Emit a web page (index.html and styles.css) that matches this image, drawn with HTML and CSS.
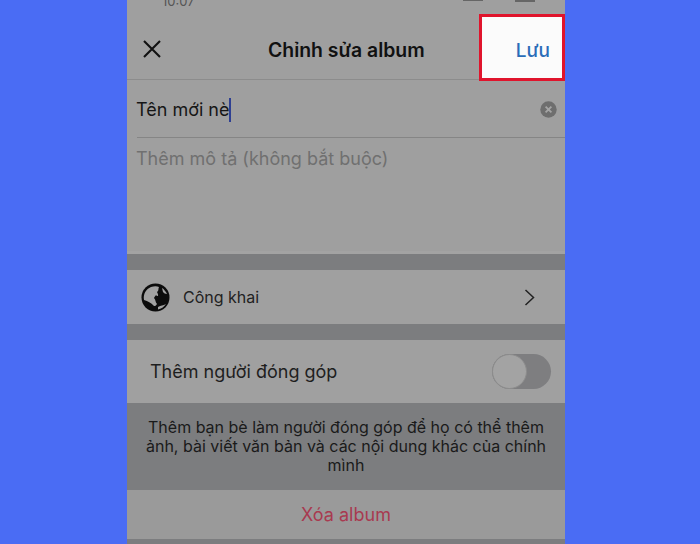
FILE: index.html
```
<!DOCTYPE html>
<html lang="vi">
<head>
<meta charset="utf-8">
<title>Chỉnh sửa album</title>
<link rel="stylesheet" href="styles.css">
</head>
<body>
<main class="phone">
  <div class="status"><span class="status-left">10:07</span><span class="signal"></span><span class="battery"></span></div>
  <header class="nav">
    <button class="close" aria-label="Đóng">
      <svg width="20" height="20" viewBox="0 0 20 20"><path d="M2 2 L18 18 M18 2 L2 18" stroke="#111" stroke-width="2.1" fill="none"/></svg>
    </button>
    <h1 class="title">Chỉnh sửa album</h1>
    <div class="save">Lưu</div>
  </header>
  <section class="fields">
    <div class="name-row">
      <span class="name">Tên mới nè</span><span class="caret"></span>
      <span class="clear">
        <svg width="17" height="17" viewBox="0 0 17 17"><circle cx="8.5" cy="8.5" r="8.2" fill="#6e6e6e"/><path d="M5.6 5.6 L11.4 11.4 M11.4 5.6 L5.6 11.4" stroke="#a5a5a5" stroke-width="1.8"/></svg>
      </span>
    </div>
    <div class="desc">Thêm mô tả (không bắt buộc)</div>
  </section>
  <div class="gap"></div>
  <section class="privacy">
    <svg class="globe" width="29" height="29" viewBox="0 0 29 29">
      <circle cx="14.5" cy="14.5" r="14" fill="#0c0c0c"/>
      <path d="M3 17 C2 11 5 6 10 4 C13 3 16 3 18 4 C17 6 18 8 16 9 C17 11 18 13 16 13 C15 11 14 13 13 15 C15 17 14 19 16 21 C15 23 13 24 12 22 C10 20 7 18 3 17 Z" fill="#a2a2a2"/>
      <path d="M17 24 C20 22 22 23 25 21 C23 24 20 26 17 26.5 Z" fill="#a2a2a2"/>
      <path d="M21 5 C23 6 25 9 26 11 C24 11 23 10 22 9 Z" fill="#a2a2a2"/>
    </svg>
    <span class="privacy-label">Công khai</span>
    <svg class="chevron" width="11" height="17" viewBox="0 0 11 17"><path d="M1.5 1 L9.5 8.5 L1.5 16" stroke="#222" stroke-width="1.5" fill="none"/></svg>
  </section>
  <div class="gap"></div>
  <section class="contrib">
    <span class="contrib-label">Thêm người đóng góp</span>
    <span class="toggle"><span class="knob"></span></span>
  </section>
  <p class="hint">Thêm bạn bè làm người đóng góp để họ có thể thêm ảnh, bài viết văn bản và các nội dung khác của chính mình</p>
  <section class="delete">Xóa album</section>
  <div class="rest"></div>
</main>
</body>
</html>
```

FILE: styles.css
```
* { box-sizing: border-box; }
html, body { margin: 0; height: 100%; }
body {
  width: 700px;
  height: 544px;
  overflow: hidden;
  background: #4a6cf4;
  display: flex;
  font-family: Inter, "Liberation Sans", sans-serif;
  color: #1c1c1c;
}
.phone {
  width: 438px;
  margin-left: 127px;
  height: 544px;
  background: #9c9c9c;
  display: flex;
  flex-direction: column;
}
.status {
  height: 18px;
  display: flex;
  align-items: flex-start;
  font-size: 13px;
  line-height: 3px;
  color: #555;
  overflow: hidden;
  padding-left: 35px;
  background: #9f9f9f;
}
.signal {
  width: 20px;
  height: 1px;
  margin-left: 268px;
  background: #666;
}
.battery {
  width: 20px;
  height: 2px;
  margin-left: 32px;
  background: #666;
}
.nav {
  height: 62px;
  display: flex;
  align-items: center;
  position: relative;
  background: #9f9f9f;
  border-bottom: 1px solid #8c8c8c;
}
.close {
  border: 0;
  background: none;
  padding: 0;
  margin-left: 15px;
  width: 20px;
  height: 20px;
  display: flex;
}
.title {
  position: absolute;
  left: 141px;
  top: 20px;
  margin: 0;
  font-size: 19.4px;
  line-height: 24px;
  font-weight: 600;
  color: #111;
  white-space: nowrap;
}
.save {
  position: absolute;
  right: 0;
  top: -4px;
  width: 86px;
  height: 67px;
  background: #fbfbfb;
  border: 3px solid #e0142c;
  color: #2a6db8;
  font-size: 19px;
  font-weight: 500;
  line-height: 67px;
  text-align: right;
  padding-right: 12px;
}
.fields {
  height: 174px;
  padding-left: 10px;
  background: #9f9f9f;
  border-bottom: 3px solid #a3a3a3;
}
.name-row {
  height: 58px;
  display: flex;
  align-items: center;
  border-bottom: 1px solid #858585;
  font-size: 18px;
  padding-top: 2px;
}
.name { color: #161616; white-space: nowrap; margin-left: -1px; }
.caret {
  width: 2px;
  height: 24px;
  background: #2e3f92;
}
.clear {
  margin-left: auto;
  margin-right: 8px;
  display: flex;
}
.desc {
  margin-top: 9px;
  margin-left: -1px;
  font-size: 18px;
  line-height: 24px;
  color: #707070;
  white-space: nowrap;
}
.gap {
  height: 16px;
  background: #7c7d7f;
}
.privacy {
  height: 54px;
  display: flex;
  align-items: center;
  padding-left: 14px;
  background: #a0a0a0;
}
.privacy-label {
  margin-left: 13px;
  font-size: 16px;
  color: #222;
}
.chevron {
  margin-left: auto;
  margin-right: 30px;
}
.contrib {
  height: 63px;
  display: flex;
  align-items: center;
  padding-left: 24px;
  background: #a0a0a0;
}
.contrib-label {
  font-size: 18px;
  color: #1e1e1e;
  margin-left: -1px;
}
.toggle {
  margin-left: auto;
  margin-right: 14px;
  width: 59px;
  height: 35px;
  border-radius: 18px;
  background: #7e7e80;
  display: flex;
}
.knob {
  width: 35px;
  height: 35px;
  border-radius: 50%;
  background: #a3a3a3;
  border: 1px solid #8c8c8c;
}
.hint {
  margin: 0;
  height: 87px;
  padding: 15px 16px 0;
  background: #7c7d7f;
  font-size: 16px;
  line-height: 19px;
  text-align: center;
  color: #1a1a1a;
}
.delete {
  height: 49px;
  background: #9a9a9a;
  font-size: 18px;
  line-height: 50px;
  text-align: center;
  color: #a83a50;
}
.rest {
  flex: 1;
  background: #7c7d7f;
}
```
